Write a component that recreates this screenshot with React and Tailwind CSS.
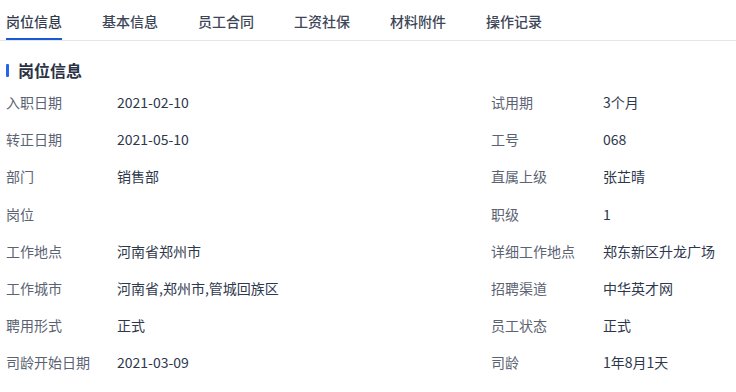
import React, { useState } from 'react';

const tabs = ['岗位信息', '基本信息', '员工合同', '工资社保', '材料附件', '操作记录'];

const rows = [
  ['入职日期', '2021-02-10', '试用期', '3个月'],
  ['转正日期', '2021-05-10', '工号', '068'],
  ['部门', '销售部', '直属上级', '张芷晴'],
  ['岗位', '', '职级', '1'],
  ['工作地点', '河南省郑州市', '详细工作地点', '郑东新区升龙广场'],
  ['工作城市', '河南省,郑州市,管城回族区', '招聘渠道', '中华英才网'],
  ['聘用形式', '正式', '员工状态', '正式'],
  ['司龄开始日期', '2021-03-09', '司龄', '1年8月1天'],
];

export default function App() {
  const [active, setActive] = useState(0);

  return (
    <div
      className="w-[736px] h-[392px] overflow-hidden bg-white"
      style={{ fontFamily: '"Noto Sans CJK SC", "Noto Sans", sans-serif' }}
    >
      {/* tabs */}
      <div className="flex gap-10 pl-[6px] border-b border-[#e3e6eb] h-[41px]">
        {tabs.map((t, i) => (
          <button
            key={t}
            onClick={() => setActive(i)}
            className={`h-10 pt-[4px] flex items-center text-[14px] font-medium border-b-2 ${
              active === i ? 'border-[#1b5ad6] text-[#333c4d]' : 'border-transparent text-[#3d4657]'
            }`}
          >
            {t}
          </button>
        ))}
      </div>

      {/* section title */}
      <div className="flex items-center gap-[9px] pl-[6px] mt-[18px] h-[22px]">
        <span className="w-[3px] h-[13px] rounded-[1px] bg-[#2563eb]" />
        <span className="text-[16px] font-bold text-[#2a3245] leading-[22px]">岗位信息</span>
      </div>

      {/* fields */}
      <div className="grid grid-cols-[111px_374px_112px_1fr] pl-[6px] mt-[3px] text-[14px]">
        {rows.map((r) => (
          <React.Fragment key={r[0]}>
            <div className="h-[37.2px] flex items-center text-[#5b6373]">{r[0]}</div>
            <div className="h-[37.2px] flex items-center text-[#2e384d]">{r[1]}</div>
            <div className="h-[37.2px] flex items-center text-[#5b6373]">{r[2]}</div>
            <div className="h-[37.2px] flex items-center text-[#2e384d]">{r[3]}</div>
          </React.Fragment>
        ))}
      </div>
    </div>
  );
}
